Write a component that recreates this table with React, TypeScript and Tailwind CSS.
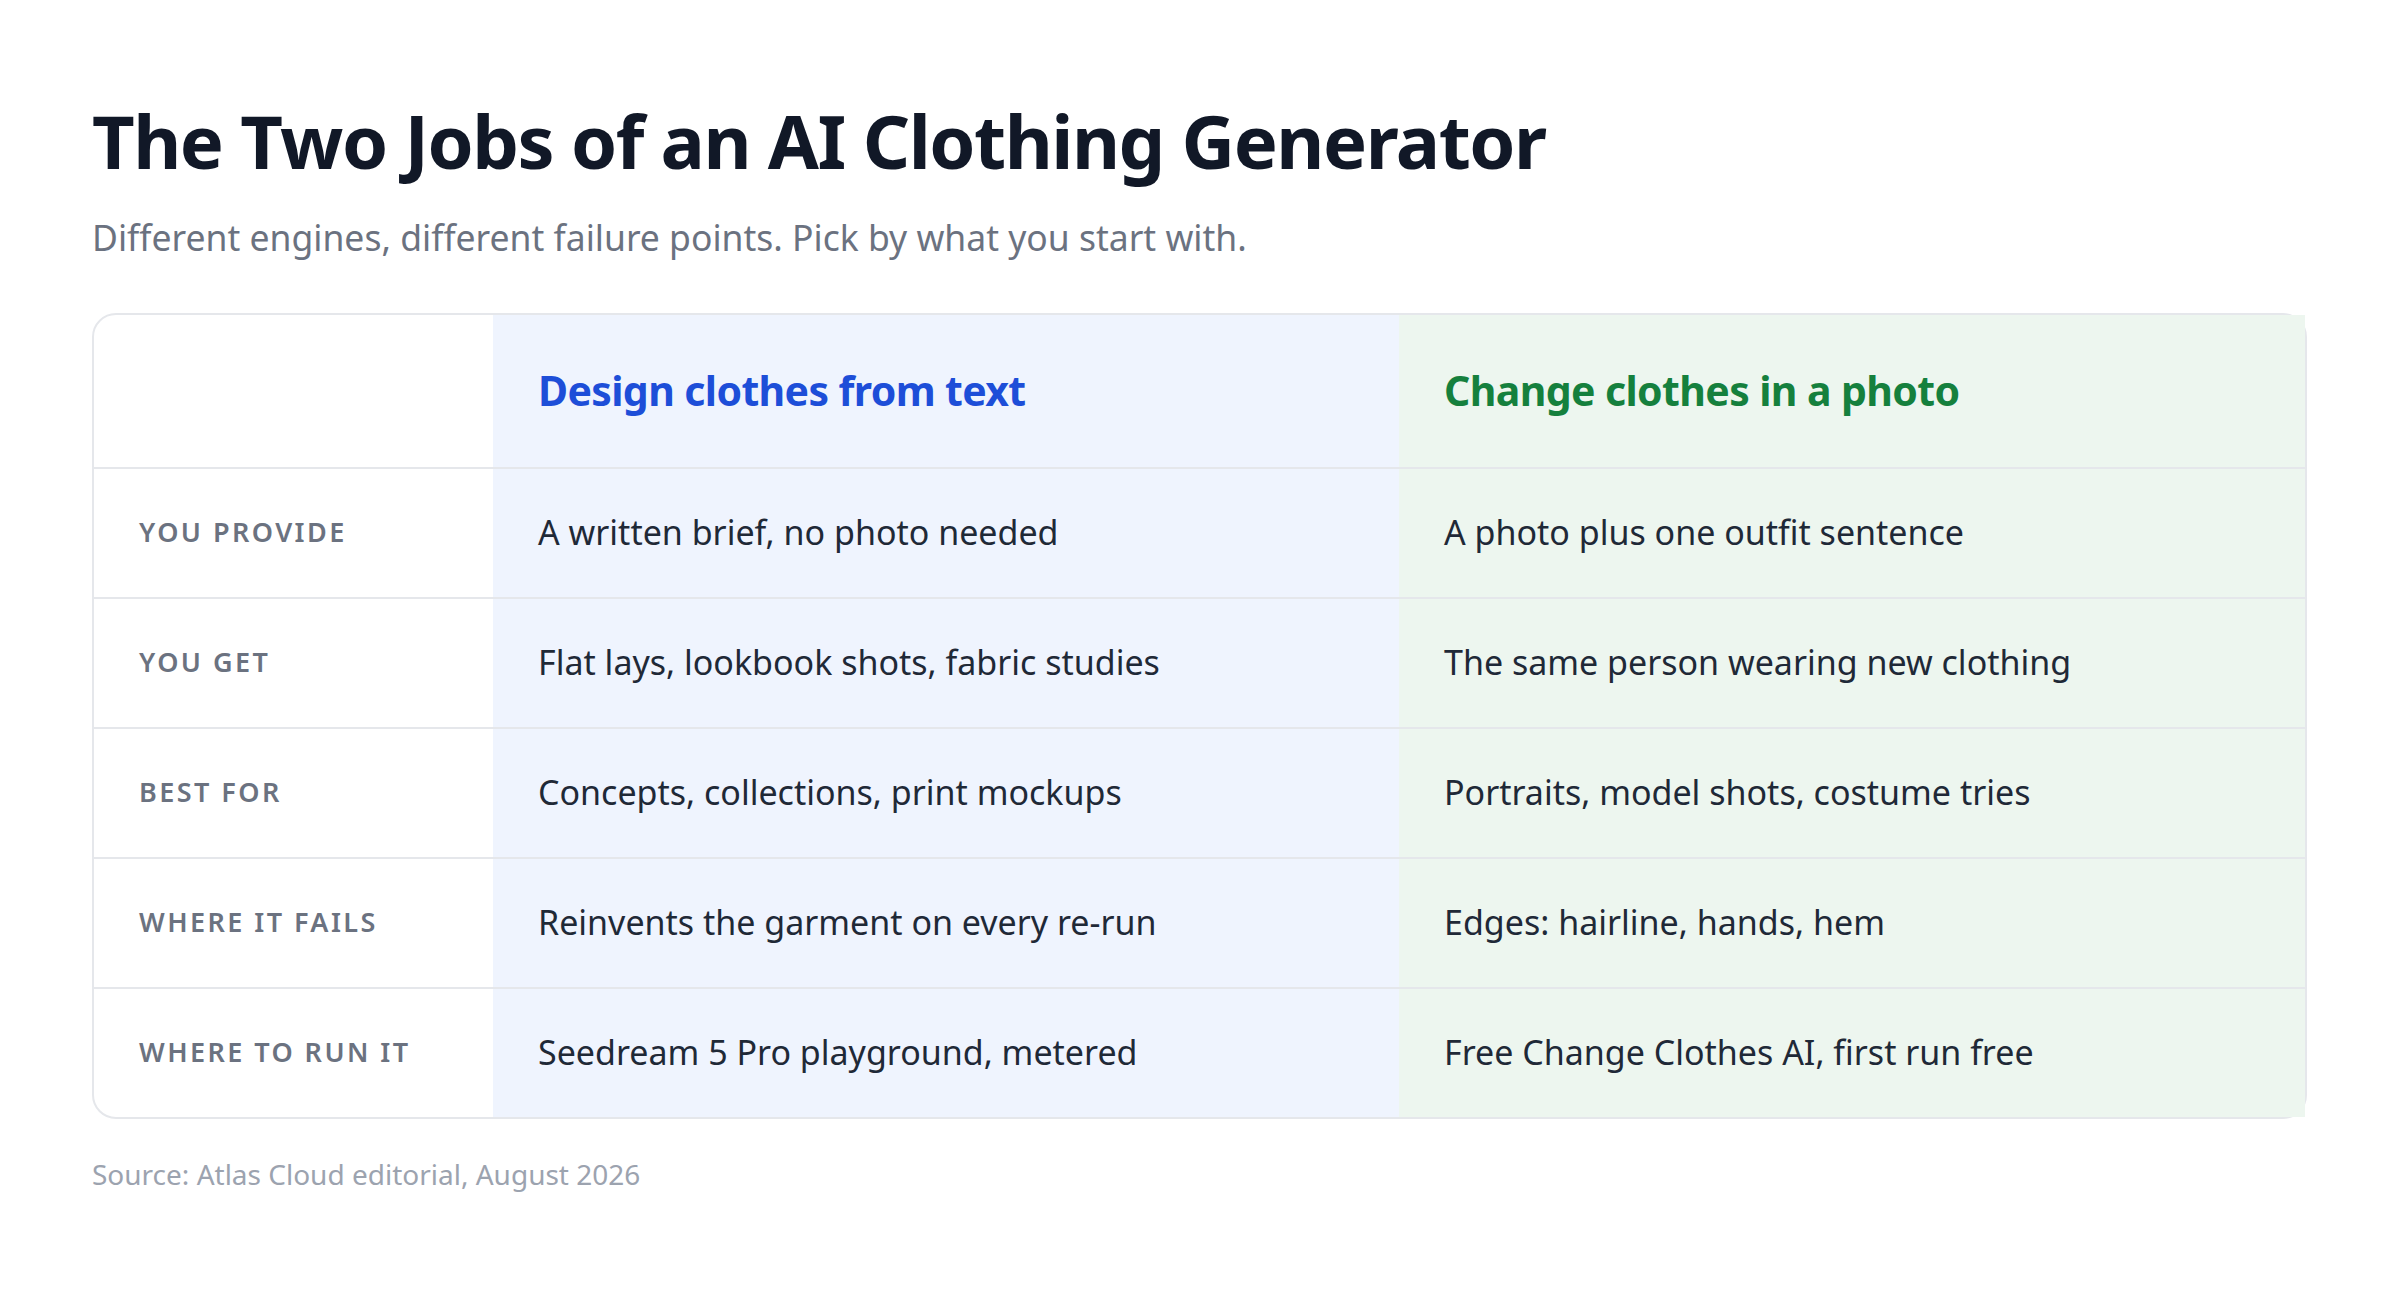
import React from 'react';

interface Row {
  label: string;
  text: string;
  photo: string;
}

const rows: Row[] = [
  { label: 'You provide', text: 'A written brief, no photo needed', photo: 'A photo plus one outfit sentence' },
  { label: 'You get', text: 'Flat lays, lookbook shots, fabric studies', photo: 'The same person wearing new clothing' },
  { label: 'Best for', text: 'Concepts, collections, print mockups', photo: 'Portraits, model shots, costume tries' },
  { label: 'Where it fails', text: 'Reinvents the garment on every re-run', photo: 'Edges: hairline, hands, hem' },
  { label: 'Where to run it', text: 'Seedream 5 Pro playground, metered', photo: 'Free Change Clothes AI, first run free' },
];

const App: React.FC = () => {
  return (
    <div className="min-h-screen bg-white px-[92px] pt-[100px] font-['Noto_Sans',sans-serif]">
      <h1 className="text-[74px] font-bold leading-[1.1] tracking-[-0.02em] text-[#111827]">
        The Two Jobs of an AI Clothing Generator
      </h1>
      <p className="mt-[33px] text-[35.5px] leading-[1.3] text-[#6b7280]">
        Different engines, different failure points. Pick by what you start with.
      </p>

      {/* Comparison table */}
      <div className="mt-[52px] w-[2215px] rounded-[24px] border-2 border-[#e5e7eb]">
        <div className="grid h-[152px] grid-cols-[399px_1fr_1fr]">
          <div />
          <div className="flex items-center bg-[#eff4fe] px-[45px]">
            <span className="text-[41px] font-bold tracking-[-0.015em] text-[#1d4ed8]">Design clothes from text</span>
          </div>
          <div className="flex items-center bg-[#edf6ef] px-[45px]">
            <span className="text-[41px] font-bold tracking-[-0.015em] text-[#15803d]">Change clothes in a photo</span>
          </div>
        </div>

        {rows.map((row) => (
          <div key={row.label} className="grid h-[130px] grid-cols-[399px_1fr_1fr] border-t-2 border-[#e5e7eb]">
            <div className="flex items-center px-[45px]">
              <span className="text-[27px] font-semibold uppercase tracking-[0.09em] text-[#6b7280]">{row.label}</span>
            </div>
            <div className="flex items-center bg-[#eff4fe] px-[45px]">
              <span className="text-[34px] text-[#1f2937]">{row.text}</span>
            </div>
            <div className="flex items-center bg-[#edf6ef] px-[45px]">
              <span className="text-[34px] text-[#1f2937]">{row.photo}</span>
            </div>
          </div>
        ))}
      </div>

      <p className="mt-[34px] text-[28px] text-[#9ca3af]">Source: Atlas Cloud editorial, August 2026</p>
    </div>
  );
};

export default App;
